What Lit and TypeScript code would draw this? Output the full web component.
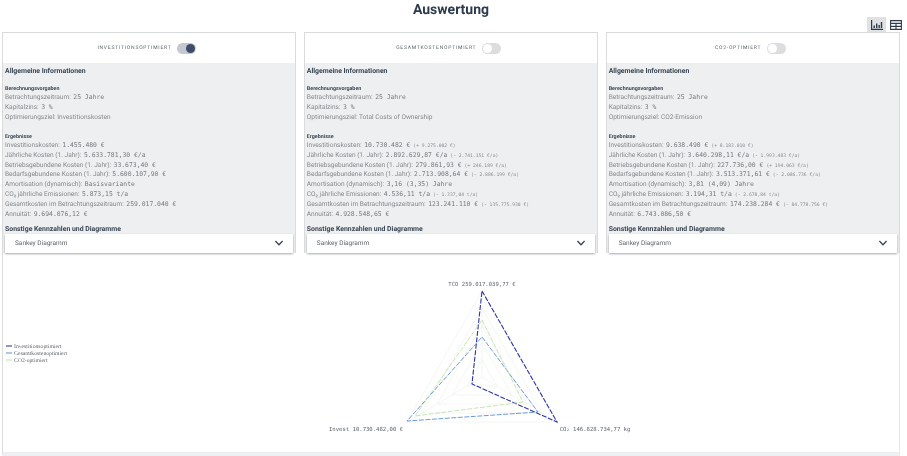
import { LitElement, html, css, svg } from 'lit';
import { customElement } from 'lit/decorators.js';

interface Row {
  label: string;
  value: string;
  note?: string;
}

interface Variant {
  name: string;
  on: boolean;
  goal: string;
  rows: Row[];
}

const variants: Variant[] = [
  {
    name: 'Investitionsoptimiert',
    on: true,
    goal: 'Investitionskosten',
    rows: [
      { label: 'Investitionskosten:', value: '1.455.480 €' },
      { label: 'Jährliche Kosten (1. Jahr):', value: '5.633.781,30 €/a' },
      { label: 'Betriebsgebundene Kosten (1. Jahr):', value: '33.673,40 €' },
      { label: 'Bedarfsgebundene Kosten (1. Jahr):', value: '5.600.107,90 €' },
      { label: 'Amortisation (dynamisch):', value: 'Basisvariante' },
      { label: 'CO₂ jährliche Emissionen:', value: '5.873,15 t/a' },
      { label: 'Gesamtkosten im Betrachtungszeitraum:', value: '259.017.040 €' },
      { label: 'Annuität:', value: '9.694.076,12 €' },
    ],
  },
  {
    name: 'Gesamtkostenoptimiert',
    on: false,
    goal: 'Total Costs of Ownership',
    rows: [
      { label: 'Investitionskosten:', value: '10.730.482 €', note: '(+ 9.275.002 €)' },
      { label: 'Jährliche Kosten (1. Jahr):', value: '2.892.629,87 €/a', note: '(- 2.741.151 €/a)' },
      { label: 'Betriebsgebundene Kosten (1. Jahr):', value: '279.861,93 €', note: '(+ 246.189 €/a)' },
      { label: 'Bedarfsgebundene Kosten (1. Jahr):', value: '2.713.908,64 €', note: '(- 2.886.199 €/a)' },
      { label: 'Amortisation (dynamisch):', value: '3,16 (3,35) Jahre' },
      { label: 'CO₂ jährliche Emissionen:', value: '4.536,11 t/a', note: '(- 1.337,04 t/a)' },
      { label: 'Gesamtkosten im Betrachtungszeitraum:', value: '123.241.110 €', note: '(- 135.775.930 €)' },
      { label: 'Annuität:', value: '4.928.548,65 €' },
    ],
  },
  {
    name: 'CO2-optimiert',
    on: false,
    goal: 'CO2-Emission',
    rows: [
      { label: 'Investitionskosten:', value: '9.638.490 €', note: '(+ 8.183.010 €)' },
      { label: 'Jährliche Kosten (1. Jahr):', value: '3.640.298,11 €/a', note: '(- 1.993.483 €/a)' },
      { label: 'Betriebsgebundene Kosten (1. Jahr):', value: '227.736,00 €', note: '(+ 194.063 €/a)' },
      { label: 'Bedarfsgebundene Kosten (1. Jahr):', value: '3.513.371,61 €', note: '(- 2.086.736 €/a)' },
      { label: 'Amortisation (dynamisch):', value: '3,81 (4,09) Jahre' },
      { label: 'CO₂ jährliche Emissionen:', value: '3.194,31 t/a', note: '(- 2.678,84 t/a)' },
      { label: 'Gesamtkosten im Betrachtungszeitraum:', value: '174.238.284 €', note: '(- 84.778.756 €)' },
      { label: 'Annuität:', value: '6.743.086,50 €' },
    ],
  },
];

// radar geometry, in the coordinates of the chart panel
const center = { x: 479, y: 124 };
const axes = [
  { x: 479, y: 38 },
  { x: 554, y: 169 },
  { x: 404, y: 169 },
];
const ring = (f: number) =>
  axes
    .map((a) => `${center.x + (a.x - center.x) * f},${center.y + (a.y - center.y) * f}`)
    .join(' ');

const series = [
  { color: '#2c35a8', width: 1.1, points: '479,38 554,169 469,131' },
  { color: '#5b8fd6', width: 0.9, points: '479,84 535,159 404,168' },
  { color: '#bfe3a8', width: 0.9, points: '479,67 520,149 412,163' },
];

const legend = [
  { name: 'Investitionsoptimiert', color: '#1f2a90', y: 93 },
  { name: 'Gesamtkostenoptimiert', color: '#5b8fd6', y: 100 },
  { name: 'CO2-optimiert', color: '#bfe3a8', y: 107 },
];

@customElement('app-root')
export class AppRoot extends LitElement {
  static styles = css`
    :host {
      display: block;
      width: 907px;
      height: 456px;
      overflow: hidden;
      font-family: Roboto, 'Liberation Sans', sans-serif;
      color: #85888c;
      text-rendering: geometricPrecision;
      will-change: opacity;
    }
    h1 {
      margin: 0;
      height: 16px;
      padding: 2px 5px 0 0;
      line-height: 16px;
      text-align: center;
      font-size: 14px;
      font-weight: 700;
      color: #2d3b4e;
    }
    .views {
      display: flex;
      justify-content: flex-end;
      height: 14px;
      margin-top: -1px;
      padding: 0 2px 1px 0;
    }
    .view {
      width: 19px;
      height: 15px;
      display: flex;
      align-items: center;
      justify-content: center;
      background: #fff;
    }
    .view.active {
      background: #dfe1e3;
    }
    .cards {
      display: grid;
      grid-template-columns: repeat(3, 1fr);
      gap: 8px;
      padding: 0 7.5px 0 2px;
    }
    .card {
      border: 1px solid #d9dbdd;
      border-bottom: none;
      height: 221px;
      box-sizing: border-box;
      display: flex;
      flex-direction: column;
    }
    .head {
      height: 30px;
      flex: none;
      display: flex;
      align-items: center;
      justify-content: center;
      gap: 6px;
      padding-right: 4px;
      font-size: 5px;
      letter-spacing: 0.77px;
      text-transform: uppercase;
      color: #5c636b;
    }
    .toggle {
      width: 19px;
      height: 11px;
      border-radius: 6px;
      background: #dcdddf;
      display: flex;
      align-items: center;
      padding: 0 1px;
      box-sizing: border-box;
    }
    .toggle i {
      width: 9px;
      height: 9px;
      border-radius: 50%;
      background: #fff;
    }
    .toggle.on {
      background: #c4c9d1;
      justify-content: flex-end;
    }
    .toggle.on i {
      background: #3d4c68;
    }
    .body {
      flex: 1;
      background: #eeeff0;
      padding: 3px 2px 0 2px;
      min-height: 0;
    }
    h2 {
      margin: 0;
      font-size: 6.9px;
      line-height: 10px;
      font-weight: 700;
      color: #3b4654;
    }
    h3 {
      margin: 0;
      font-size: 5.4px;
      line-height: 7px;
      font-weight: 700;
      color: #3b4654;
    }
    .group {
      margin-top: 10px;
    }
    .group + .group {
      margin-top: 11px;
    }
    .row {
      height: 9.92px;
      font-size: 6.55px;
      line-height: 9.92px;
      white-space: nowrap;
    }
    .mono {
      font-family: 'DejaVu Sans Mono', monospace;
      font-size: 6.4px;
      color: #75797e;
      margin-left: 2.5px;
    }
    .note {
      font-family: 'DejaVu Sans Mono', monospace;
      font-size: 4.7px;
      color: #8a8e93;
      margin-left: 3px;
    }
    h2.more {
      margin-top: 4px;
    }
    .select {
      height: 19px;
      background: #fff;
      box-shadow: 0 1px 2px rgba(0, 0, 0, 0.35);
      display: flex;
      align-items: center;
      justify-content: space-between;
      padding: 0 9px 0 10px;
      font-size: 6.5px;
      color: #5c636b;
    }
    .chart {
      margin: 0 7.5px 0 2px;
      height: 199px;
      border-left: 1px solid #d9dbdd;
      border-right: 1px solid #e6e7e8;
      border-bottom: 4px solid #eeeff0;
    }
    svg.radar {
      display: block;
    }
    .axis {
      font-family: 'DejaVu Sans Mono', monospace;
      font-size: 5.6px;
      fill: #5c636b;
    }
    .legend {
      font-family: 'Liberation Serif', serif;
      font-size: 5.7px;
      fill: #5c636b;
    }
  `;

  private renderRow(row: Row) {
    return html`<div class="row">
      ${row.label}<span class="mono">${row.value}</span>${row.note
        ? html`<span class="note">${row.note}</span>`
        : ''}
    </div>`;
  }

  private renderCard(v: Variant) {
    return html`
      <section class="card">
        <div class="head">
          <span>${v.name}</span>
          <span class="toggle ${v.on ? 'on' : ''}"><i></i></span>
        </div>
        <div class="body">
          <h2>Allgemeine Informationen</h2>
          <div class="group">
            <h3>Berechnungsvorgaben</h3>
            <div class="row">Betrachtungszeitraum:<span class="mono">25 Jahre</span></div>
            <div class="row">Kapitalzins:<span class="mono">3 %</span></div>
            <div class="row">Optimierungsziel: ${v.goal}</div>
          </div>
          <div class="group">
            <h3>Ergebnisse</h3>
            ${v.rows.map((r) => this.renderRow(r))}
          </div>
          <h2 class="more">Sonstige Kennzahlen und Diagramme</h2>
          <div class="select">
            <span>Sankey Diagramm</span>
            <svg width="10" height="6" viewBox="0 0 10 6">
              <path d="M1.4 1l3.6 3.8L8.6 1" fill="none" stroke="#3b4654" stroke-width="1.3" />
            </svg>
          </div>
        </div>
      </section>
    `;
  }

  private renderRadar() {
    return html`
      <svg class="radar" width="895" height="195" viewBox="0 0 895 195">
        ${[0.2, 0.4, 0.6, 0.8, 1].map(
          (f) => svg`<polygon points=${ring(f)} fill="none" stroke="#eef0ee" stroke-width="0.7" />`
        )}
        ${axes.map(
          (a) => svg`<line x1=${center.x} y1=${center.y} x2=${a.x} y2=${a.y} stroke="#eef0ee" stroke-width="0.7" />`
        )}
        ${series.map(
          (s) => svg`<polygon
            points=${s.points}
            fill="none"
            stroke=${s.color}
            stroke-width=${s.width}
            stroke-dasharray="5 1.5"
          />`
        )}
        <text class="axis" x="479" y="33" text-anchor="middle">TCO 259.017.039,77 €</text>
        <text class="axis" x="363" y="178" text-anchor="middle">Invest 10.730.482,00 €</text>
        <text class="axis" x="592" y="178" text-anchor="middle">CO₂ 146.828.734,77 kg</text>
        ${legend.map(
          (l) => svg`
            <line x1="3" x2="9" y1=${l.y} y2=${l.y} stroke=${l.color} stroke-width="1" />
            <text class="legend" x="11" y=${l.y + 1.6}>${l.name}</text>
          `
        )}
      </svg>
    `;
  }

  render() {
    return html`
      <h1>Auswertung</h1>
      <div class="views">
        <span class="view active">
          <svg width="12" height="10" viewBox="0 0 12 10">
            <path d="M.6 0v9.4H12" fill="none" stroke="#2d3b4e" stroke-width="1.2" />
            <path d="M2.5 5.5h1.4V8H2.5zM5 3.5h1.4V8H5zM7.5 5h1.4v3H7.5zM9.8 2h1.4v6H9.8z" fill="#2d3b4e" />
          </svg>
        </span>
        <span class="view">
          <svg width="12" height="10" viewBox="0 0 12 10">
            <path
              d="M.6.6h10.8v8.8H.6zM.6 3.4h10.8M.6 6.4h10.8M6 3.4v6"
              fill="none"
              stroke="#2d3b4e"
              stroke-width="1.1"
            />
          </svg>
        </span>
      </div>
      <div class="cards">${variants.map((v) => this.renderCard(v))}</div>
      <div class="chart">${this.renderRadar()}</div>
    `;
  }
}
